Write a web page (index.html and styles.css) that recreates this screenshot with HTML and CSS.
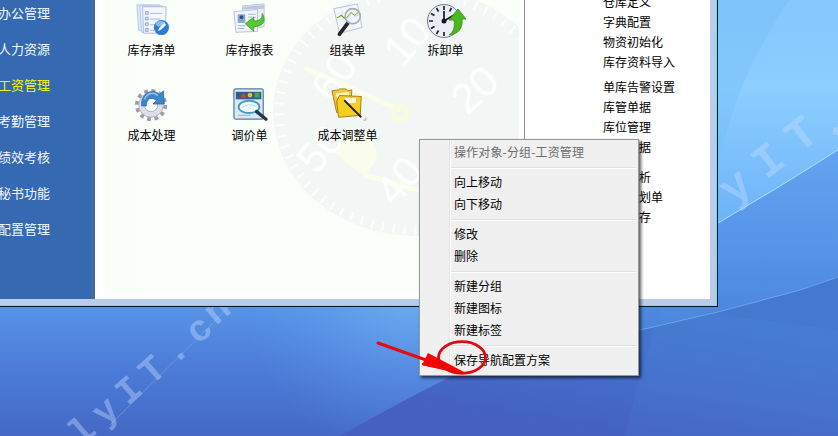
FILE: index.html
```html
<!DOCTYPE html>
<html lang="zh-CN">
<head>
  <meta charset="UTF-8">
  <title>导航配置</title>
  <link rel="stylesheet" href="styles.css">
</head>
<body>
  <svg class="wallpaper" viewBox="0 0 838 436" aria-hidden="true">
    <defs>
      <linearGradient id="sky" x1="0" y1="300" x2="0" y2="436" gradientUnits="userSpaceOnUse">
        <stop offset="0" stop-color="#5896e8"/>
        <stop offset=".5" stop-color="#4c7cd8"/>
        <stop offset="1" stop-color="#4468c6"/>
      </linearGradient>
      <radialGradient id="glow" cx="410" cy="290" r="170" gradientUnits="userSpaceOnUse">
        <stop offset="0" stop-color="#7ab9f7" stop-opacity=".65"/>
        <stop offset="1" stop-color="#5c9cf0" stop-opacity="0"/>
      </radialGradient>
      <linearGradient id="light" x1="0" y1="0" x2="0" y2="225" gradientUnits="userSpaceOnUse">
        <stop offset="0" stop-color="#84c8fc"/>
        <stop offset=".4" stop-color="#8bceff"/>
        <stop offset="1" stop-color="#6db2f8"/>
      </linearGradient>
      <linearGradient id="mid" x1="0" y1="150" x2="0" y2="325" gradientUnits="userSpaceOnUse">
        <stop offset="0" stop-color="#63a4f0"/>
        <stop offset=".5" stop-color="#5796e8"/>
        <stop offset="1" stop-color="#4b85dc"/>
      </linearGradient>
      <linearGradient id="deep" x1="620" y1="310" x2="600" y2="436" gradientUnits="userSpaceOnUse">
        <stop offset="0" stop-color="#4579d0"/>
        <stop offset=".55" stop-color="#446ccb"/>
        <stop offset="1" stop-color="#4560bf"/>
      </linearGradient>
    </defs>
    <rect width="838" height="436" fill="url(#sky)"/>
    <rect y="300" width="600" height="136" fill="url(#glow)"/>
    <path d="M110 425L230 306" stroke="#8bbcf5" stroke-opacity=".4" fill="none"/>
    <path d="M640 0H838V340H640z" fill="url(#mid)"/>
    <path d="M700 0H838V150Q780 187 718 223H700z" fill="url(#light)"/>
    <path d="M789 0Q740 75 727 132L718 160V0z" fill="#6ab8f4" fill-opacity=".25"/>
    <path d="M718 223Q780 187 838 150" stroke="#a9dcff" fill="none"/>
    <path d="M340 436Q400 402 450 377Q560 345 640 330Q720 313 800 290L838 277V436z" fill="url(#deep)"/>
    <path d="M640 330Q720 313 800 290L838 277" stroke="#75b5f2" stroke-opacity=".7" fill="none"/>
    <path d="M661 307L640 376L625 436H838V330z" fill="#5b9be0" fill-opacity=".1"/>
    <g class="watermark">
      <text x="0 31 62 93 124 155" y="0" font-size="37" transform="translate(81 447) rotate(-41)">lyIT.c</text>
      <text font-size="37" transform="translate(216 326) rotate(-41)">n</text>
      <text x="0 42 84" y="0" font-size="46" transform="translate(733 206) rotate(-38)">yIT</text>
      <circle cx="837" cy="131" r="4"/>
    </g>
  </svg>

  <div class="window">
    <nav class="sidebar">
      <a>办公管理</a>
      <a>人力资源</a>
      <a class="active">工资管理</a>
      <a>考勤管理</a>
      <a>绩效考核</a>
      <a>秘书功能</a>
      <a>配置管理</a>
    </nav>

    <main class="desk">
      <svg class="clock-bg" viewBox="105 0 414 294" aria-hidden="true">
        <ellipse cx="415" cy="112" rx="142" ry="124" fill="#f2f7f5"/>
        <ellipse cx="415" cy="112" rx="136" ry="118" fill="none" stroke="#fbfffb" stroke-width="9" stroke-dasharray="2 9"/>
        <path d="M333 151L352 130Q376 134 378 158L364 177z" fill="#fbfee8" fill-opacity=".8"/>
        <path d="M305 68L400 110M365 175L424 192" stroke="#fafdea" stroke-width="5"/>
        <circle cx="400" cy="113" r="7" fill="none" stroke="#f8fbdc" stroke-width="5"/>
        <g class="dial">
          <text transform="translate(403 68) rotate(-50)">10</text>
          <text transform="translate(467 116) rotate(-42)">20</text>
          <text transform="translate(395 208) rotate(-50)">40</text>
          <text transform="translate(316 176) rotate(-50)">50</text>
          <text transform="translate(333 104) rotate(-56)">60</text>
        </g>
      </svg>
      <div class="icons">
        <div class="icon">
          <svg viewBox="0 0 36 36">
            <path d="M2 2h24v27H4z" fill="#e3eafb" stroke="#b3c3e2"/>
            <path d="M5 3h24v28H7z" fill="#eaf0fd" stroke="#b3c3e2"/>
            <path d="M8 4h25l-1 28H9z" fill="#f4f7ff" stroke="#a8bbdc"/>
            <path d="M11 9h3v3h-3zM11 15h3v3h-3zM11 21h3v3h-3zM11 27h3v3h-3z" fill="#dae4fa" stroke="#8098cc" stroke-width=".8"/>
            <path d="M16 11h13M16 17h11M16 23h6M16 29h5" stroke="#a9b9d9"/>
            <circle cx="28" cy="26" r="8" fill="#2d7bd2"/>
            <ellipse cx="27" cy="22" rx="5" ry="3" fill="#89bdf2"/>
            <path d="M24 30l2-4 5-5 2 2-5 5z" fill="#e9f5ff"/>
          </svg>
          <span>库存清单</span>
        </div>
        <div class="icon">
          <svg viewBox="0 0 36 36">
            <path d="M10 3l23-2v24l-22 5z" fill="#e9edf7" stroke="#c0c8d8"/>
            <path d="M11 4l22-2v4l-22 1z" fill="#bcc6de"/>
            <path d="M1 9l25-2v23l-23 1z" fill="#f1f4fc" stroke="#b8c3da"/>
            <path d="M5 12h8v9H5z" fill="#86a7cd"/>
            <circle cx="9" cy="15" r="2" fill="#344f7d"/>
            <path d="M16 12h8M16 15h8M16 18h7M5 24h8M5 27h7" stroke="#a9b5cc"/>
            <path d="M31 11c5 9 0 14-9 14v5l-9-8 9-7v4c7 0 9-3 9-8z" fill="#57c832" stroke="#34971d" stroke-width=".8"/>
          </svg>
          <span>库存报表</span>
        </div>
        <div class="icon">
          <svg viewBox="0 0 36 36">
            <path d="M3 6l25-5 5 25-24 6z" fill="#f5f6fe" stroke="#b9bfd5"/>
            <path d="M5 12l24-5M6 18l24-5M7 24l24-5M11 5l5 25M19 4l4 24" stroke="#e0e4f2" stroke-width=".7"/>
            <path d="M6 16l5-3 3 3 4-1 4-5 4 4 5-3" fill="none" stroke="#729c21" stroke-width="1.2"/>
            <path d="M18 21l-9 12" stroke="#26262b" stroke-width="4" stroke-linecap="round"/>
            <circle cx="23" cy="14" r="8" fill="#eef5fa" fill-opacity=".7" stroke="#a4acb4" stroke-width="1.7"/>
            <path d="M17 15l4-5 4 3 4-3" fill="none" stroke="#88a843"/>
          </svg>
          <span>组装单</span>
        </div>
        <div class="icon">
          <svg class="clock" viewBox="0 0 40 36">
            <circle cx="18" cy="18" r="16.5" fill="#ecedf7" stroke="#747b8d" stroke-width="1"/>
            <path d="M18 3v4M18 29v4M3 18h4M10.5 5l2 3.5M5 10.5l3.500 2M5 25.500l3.500-2M10.500 31l2-3.500M25.500 5l-2 3.500" stroke="#20242c" stroke-width="1.7"/>
            <path d="M18 18V8M18 18l10-6" stroke="#14171d" stroke-width="1.7"/>
            <circle cx="18" cy="18" r="2.5" fill="#14171d"/>
            <path d="M23 32c5-3 6-9 5-15h-5l9-11 8 10h-4c1 9-3 15-13 16z" fill="#4ab71f" stroke="#319013" stroke-width=".8"/>
          </svg>
          <span>拆卸单</span>
        </div>
        <div class="icon">
          <svg viewBox="0 0 36 36">
            <circle cx="17" cy="18" r="15" fill="none" stroke="#9c9dab" stroke-width="4" stroke-dasharray="4 3.85"/>
            <circle cx="17" cy="18" r="13" fill="#dcdde7" stroke="#b0b1bd"/>
            <circle cx="17" cy="18" r="7" fill="#fff" stroke="#a4aec8"/>
            <path d="M7 19C6 4 20 0 26 7l4-4 1 14H19l4-4c-6-5-11-1-11 6z" fill="#3e87cd" stroke="#2768af" stroke-width=".8"/>
            <path d="M10 12c3-7 10-8 14-4" fill="none" stroke="#94c7f1" stroke-width="1.5"/>
          </svg>
          <span>成本处理</span>
        </div>
        <div class="icon">
          <svg viewBox="0 0 36 36">
            <rect x="1" y="1" width="31" height="32" rx="2" fill="#d9e8f3" stroke="#537c9d" stroke-width="1.3"/>
            <path d="M3 4h27v8H3z" fill="#315e8c"/>
            <path d="M8 10l3-5 3 5z" fill="#e23c33"/>
            <circle cx="18" cy="7.5" r="2.5" fill="#efb92c"/>
            <path d="M23 5h5v5h-5z" fill="#43ad4c"/>
            <ellipse cx="17" cy="20" rx="11" ry="6.5" fill="#f1fbff" stroke="#4a9ac0" stroke-width="2"/>
            <path d="M9 21q8-6 16-1" stroke="#a8d9ea" fill="none"/>
            <path d="M5 29h14" stroke="#9db8ca"/>
            <path d="M25 25l10 8" stroke="#253849" stroke-width="3.5" stroke-linecap="round"/>
          </svg>
          <span>调价单</span>
        </div>
        <div class="icon">
          <svg viewBox="0 0 36 36">
            <path d="M1 3l7-1 1-1h7l2 2 4-1-1 22-15 2z" fill="#f2c840" stroke="#a87b0c"/>
            <path d="M5 6l14-2v4L6 10z" fill="#fcf0c4"/>
            <path d="M6 14l3-6 23 1-1 20-23 2z" fill="#f8cf20" stroke="#a8790a"/>
            <path d="M14 10h13v6l-12 1z" fill="#fdf5dc" stroke="#d8bd74" stroke-width=".7"/>
            <path d="M14 13l18 18" stroke="#292113" stroke-width="2"/>
            <path d="M34 34h3v-3" fill="none" stroke="#aaa"/>
          </svg>
          <span>成本调整单</span>
        </div>
      </div>
    </main>

    <aside class="links">
      <a>仓库定义</a>
      <a>字典配置</a>
      <a>物资初始化</a>
      <a>库存资料导入</a>
      <a class="gap-small">单库告警设置</a>
      <a>库管单据</a>
      <a>库位管理</a>
      <a class="tucked">据</a>
      <a class="tucked gap-large">析</a>
      <a class="tucked">划单</a>
      <a class="tucked">存</a>
    </aside>
  </div>

  <div class="menu">
    <div class="menu-item disabled">操作对象-分组-工资管理</div>
    <div class="sep"></div>
    <div class="menu-item">向上移动</div>
    <div class="menu-item">向下移动</div>
    <div class="sep"></div>
    <div class="menu-item">修改</div>
    <div class="menu-item">删除</div>
    <div class="sep"></div>
    <div class="menu-item">新建分组</div>
    <div class="menu-item">新建图标</div>
    <div class="menu-item">新建标签</div>
    <div class="sep"></div>
    <div class="menu-item">保存导航配置方案</div>
  </div>

  <svg class="marker" viewBox="0 0 120 50" aria-hidden="true">
    <path d="M4 9L52 26" stroke="#e60a0e" stroke-width="3" stroke-linecap="round"/>
    <path d="M54 19L90 38Q84 39 48 31z" fill="#f00"/>
    <path d="M48 30L87 39" stroke="#f00" stroke-width="2"/>
    <ellipse cx="88" cy="23.5" rx="23.5" ry="15.8" fill="none" stroke="#e1090d" stroke-width="2.8"/>
  </svg>
</body>
</html>
```

FILE: styles.css
```css
body {
  margin: 0;
  width: 838px;
  height: 436px;
  overflow: hidden;
  position: relative;
  background: #4c7cd8;
  font: 12px/20px "Noto Sans CJK SC", sans-serif;
  color: #000;
}
.wallpaper {
  position: absolute;
  top: 0;
  left: 0;
  width: 838px;
  height: 436px;
}
.watermark {
  fill: #c3dcff;
  fill-opacity: .42;
  font-family: "Liberation Mono", monospace;
  font-weight: bold;
}
.window {
  position: relative;
  box-sizing: border-box;
  width: 718px;
  height: 307px;
  display: flex;
  background: #fff;
  border-right: 1px solid #06142c;
  border-bottom: 1px solid #06142c;
  box-shadow: inset -1px -1px #6fdcf0, inset -7px -7px #b7cdea;
}
.sidebar {
  display: flex;
  flex-direction: column;
  box-sizing: border-box;
  width: 95px;
  height: 299px;
  overflow: hidden;
  background: #3569b2;
  border-right: 4px solid #446aa6;
  color: #f2f8ff;
  font-size: 13px;
  line-height: 36px;
}
.sidebar a {
  flex: none;
  margin-left: -2px;
  white-space: nowrap;
}
.sidebar a:first-child {
  margin-top: -5px;
}
.sidebar .active {
  color: #f4fa00;
}
.desk {
  position: relative;
  box-sizing: border-box;
  width: 430px;
  height: 299px;
  padding-left: 8px;
  border-right: 1px solid #8f9397;
}
.clock-bg {
  position: absolute;
  left: 10px;
  top: 0;
  width: 414px;
  height: 294px;
  background: linear-gradient(90deg, #f9fef8, #fafffa);
}
.dial {
  font: 42px "Liberation Sans", sans-serif;
  fill: #fcfffc;
}
.icons {
  position: relative;
  display: grid;
  grid-template-columns: repeat(4, 98px);
  grid-auto-rows: 85px;
}
.icon {
  display: flex;
  flex-direction: column;
  align-items: center;
  padding-top: 3px;
}
.icon svg {
  width: 34px;
  height: 34px;
  margin-bottom: 3px;
  overflow: visible;
}
.icon .clock {
  width: 40px;
  height: 36px;
  margin-bottom: 1px;
}
.icon span {
  margin-right: 1px;
}
.links {
  display: flex;
  flex-direction: column;
  height: 299px;
  overflow: hidden;
  padding-left: 78px;
}
.links a {
  flex: none;
}
.links a:first-child {
  margin-top: -8px;
}
.links .gap-small {
  margin-top: 5px;
}
.links .gap-large {
  margin-top: 10px;
}
/* these rows start under the popup menu */
.links .tucked {
  padding-left: 36px;
}
.menu {
  position: absolute;
  left: 419px;
  top: 139px;
  box-sizing: border-box;
  width: 220px;
  height: 237px;
  padding: 1px 2px 2px;
  border: 1px solid #979797;
  background: linear-gradient(90deg, transparent 29px, #e2e3e3 29px, #e2e3e3 30px, #fff 30px, #fff 31px, transparent 31px) #f0f0f0;
  box-shadow: 2px 2px 3px rgba(0, 0, 0, .65);
}
.menu-item {
  padding-left: 32px;
  line-height: 22px;
}
.menu-item.disabled {
  color: #6d6d6d;
  letter-spacing: .15px;
}
.sep {
  height: 1px;
  margin: 4px 0 2px 29px;
  background: #e0e0e0;
  border-bottom: 1px solid #fff;
}
.marker {
  position: absolute;
  left: 374px;
  top: 334px;
  width: 120px;
  height: 50px;
}
```
